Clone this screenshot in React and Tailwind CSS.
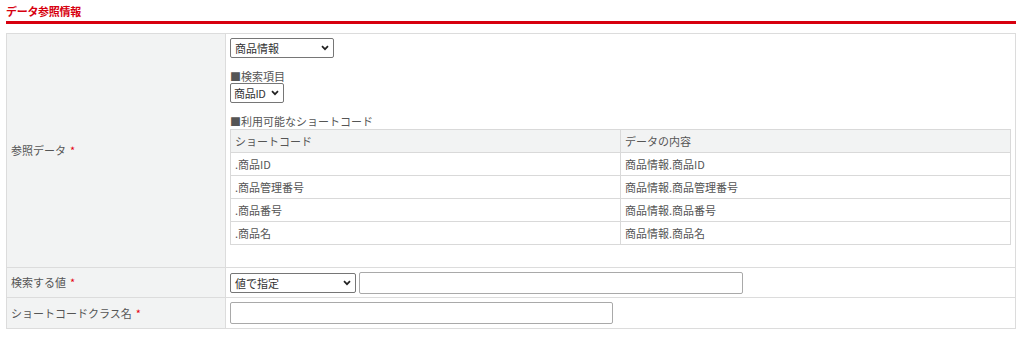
import React from "react";

const font = { fontFamily: '"Noto Sans CJK JP", "Noto Sans", sans-serif' };

function Chevron() {
  return (
    <svg width="8" height="6" viewBox="0 0 8 6" className="absolute right-[5px] top-1/2 -translate-y-1/2 pointer-events-none">
      <path d="M1 1.2 L4 4.2 L7 1.2" fill="none" stroke="#222" strokeWidth="1.7" />
    </svg>
  );
}

function Sel({ w, label, pl = "pl-[4px]" }) {
  return (
    <div className="relative shrink-0" style={{ width: w }}>
      <div className={"h-[20px] w-full rounded-[2px] border border-[#767676] bg-white text-[11px] leading-[18px] text-[#333] " + pl}>
        {label}
      </div>
      <Chevron />
    </div>
  );
}

function Req() {
  return <span className="ml-[4px] text-[#e60012]">*</span>;
}

export default function App() {
  const rows = [
    [".商品ID", "商品情報.商品ID"],
    [".商品管理番号", "商品情報.商品管理番号"],
    [".商品番号", "商品情報.商品番号"],
    [".商品名", "商品情報.商品名"],
  ];
  return (
    <div className="w-[1024px] h-[337px] bg-white px-[6px] text-[11px] text-[#555]" style={font}>
      <div className="pt-[4px] h-[18px] text-[11px] leading-[14px] font-bold tracking-[-0.3px] text-[#d7000f]">データ参照情報</div>
      <div className="mt-[3px] h-[3px] w-[1010px] bg-[#d7000f]" />
      <div className="mt-[9px] w-[1010px] border border-[#dcdcdc]">
        {/* Row 1 */}
        <div className="flex h-[234px] border-b border-[#dcdcdc]">
          <div className="flex w-[219px] shrink-0 items-center border-r border-[#dcdcdc] bg-[#f2f3f3] pl-[4px]">
            <span>参照データ<Req /></span>
          </div>
          <div className="flex-1 pl-[4px] pr-[4px] pt-[4px]">
            <Sel w={104} label="商品情報" />
            <div className="mt-[11px] h-[14px] leading-[14px]">■検索項目</div>
            <Sel w={54} label="商品ID" pl="pl-[3px] tracking-[-0.3px]" />
            <div className="mt-[11px] h-[15px] leading-[15px]">■利用可能なショートコード</div>
            <div className="w-[781px] border border-[#d9d9d9]">
              <div className="flex h-[23px] border-b border-[#d9d9d9] bg-[#f2f3f3] leading-[22px]">
                <div className="w-[390px] shrink-0 border-r border-[#d9d9d9] pl-[4px]">ショートコード</div>
                <div className="flex-1 pl-[4px]">データの内容</div>
              </div>
              {rows.map((r, i) => (
                <div
                  key={i}
                  className={
                    i < rows.length - 1
                      ? "flex h-[23px] border-b border-[#d9d9d9] leading-[22px]"
                      : "flex h-[22px] leading-[22px]"
                  }
                >
                  <div className="w-[390px] shrink-0 border-r border-[#d9d9d9] pl-[4px]">{r[0]}</div>
                  <div className="flex-1 pl-[4px]">{r[1]}</div>
                </div>
              ))}
            </div>
          </div>
        </div>
        {/* Row 2 */}
        <div className="flex h-[30px] border-b border-[#dcdcdc]">
          <div className="flex w-[219px] shrink-0 items-center border-r border-[#dcdcdc] bg-[#f2f3f3] pl-[4px]">
            <span>検索する値<Req /></span>
          </div>
          <div className="flex flex-1 items-center gap-[3px] pl-[4px]">
            <Sel w={126} label="値で指定" />
            <div className="h-[22px] w-[384px] rounded-[2px] border border-[#a9a9a9] bg-white" />
          </div>
        </div>
        {/* Row 3 */}
        <div className="flex h-[30px]">
          <div className="flex w-[219px] shrink-0 items-center border-r border-[#dcdcdc] bg-[#f2f3f3] pl-[4px]">
            <span>ショートコードクラス名<Req /></span>
          </div>
          <div className="flex flex-1 items-center pl-[4px]">
            <div className="h-[22px] w-[383px] rounded-[2px] border border-[#a9a9a9] bg-white" />
          </div>
        </div>
      </div>
    </div>
  );
}
